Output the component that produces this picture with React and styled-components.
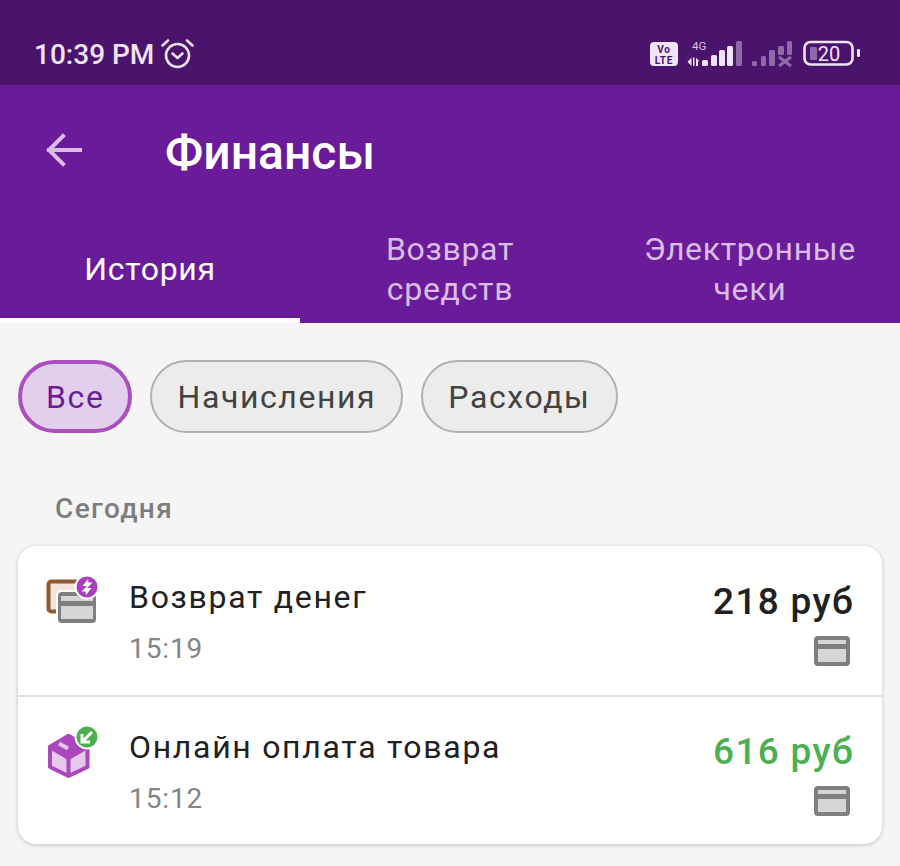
import React from 'react'
import styled, { createGlobalStyle } from 'styled-components'

const GlobalStyle = createGlobalStyle`
  html, body {
    margin: 0;
    padding: 0;
    background: #f5f5f5;
    font-family: Roboto, "Noto Sans", sans-serif;
  }
`

const Page = styled.div`
  width: 900px;
  height: 866px;
  overflow: hidden;
  background: #f5f5f5;
`

const StatusBar = styled.div`
  height: 85px;
  box-sizing: border-box;
  padding: 23px 40px 0 34px;
  background: #4a136c;
  display: flex;
  align-items: center;
  justify-content: space-between;
  color: #efe3f4;
`

const StatusLeft = styled.div`
  display: flex;
  align-items: center;
  gap: 7px;
  font-size: 28px;
  font-weight: 500;
`

const Header = styled.header`
  height: 238px;
  background: #6a1b9a;
  display: flex;
  flex-direction: column;
`

const TitleRow = styled.div`
  height: 130px;
  box-sizing: border-box;
  padding: 0 0 0 46px;
  display: flex;
  align-items: center;
  gap: 83px;
`

const Title = styled.h1`
  margin: 0;
  color: #fff;
  font-size: 48px;
  font-weight: 500;
  line-height: 1;
  padding-top: 6px;
`

const Tabs = styled.div`
  flex: 1;
  display: grid;
  grid-template-columns: repeat(3, 300px);
`

const Tab = styled.div`
  display: flex;
  align-items: center;
  justify-content: center;
  text-align: center;
  box-sizing: border-box;
  padding-top: 5px;
  font-size: 32px;
  line-height: 40px;
  letter-spacing: 0.7px;
  color: ${(p) => (p.$active ? '#fff' : '#d9bde6')};
  border-bottom: 5px solid ${(p) => (p.$active ? '#fff' : 'transparent')};
`

const Chips = styled.div`
  display: flex;
  gap: 18px;
  padding: 37px 0 0 18px;
`

const Chip = styled.div`
  height: 73px;
  box-sizing: border-box;
  padding: 0 ${(p) => (p.$active ? '24px' : '25px')};
  display: flex;
  align-items: center;
  border-radius: 37px;
  font-size: 32px;
  letter-spacing: 1.6px;
  color: ${(p) => (p.$active ? '#6a1b9a' : '#424242')};
  background: ${(p) => (p.$active ? '#e1cfeb' : '#ececec')};
  border: ${(p) => (p.$active ? '4px solid #ab4fbf' : '2px solid #b0b0b0')};
`

const SectionLabel = styled.div`
  margin: 57px 0 0 55px;
  height: 36px;
  display: flex;
  align-items: center;
  font-size: 28px;
  font-weight: 500;
  letter-spacing: 1.4px;
  color: #7d7d7d;
`

const Card = styled.div`
  margin: 20px 18px 0;
  background: #fff;
  border-radius: 18px;
  box-shadow: 0 1px 4px rgba(0, 0, 0, 0.22);
`

const Row = styled.div`
  height: 149px;
  box-sizing: border-box;
  padding: 3px 28px 0;
  display: flex;
  align-items: center;
  & + & {
    border-top: 2px solid #e2e2e2;
  }
`

const IconSlot = styled.div`
  width: 83px;
  height: 56px;
  flex: none;
  align-self: flex-start;
  margin-top: 26px;
`

const RowBody = styled.div`
  flex: 1;
  display: flex;
  flex-direction: column;
  gap: 16px;
`

const RowTitle = styled.div`
  font-size: 32px;
  line-height: 38px;
  letter-spacing: 1.7px;
  color: #212121;
`

const RowTime = styled.div`
  font-size: 28px;
  line-height: 34px;
  letter-spacing: 0.9px;
  color: #858585;
`

const RowRight = styled.div`
  display: flex;
  flex-direction: column;
  align-items: flex-end;
  gap: 13px;
  margin-top: 3px;
`

const Amount = styled.div`
  font-size: 37px;
  line-height: 42px;
  font-weight: 500;
  letter-spacing: 1.3px;
  color: ${(p) => (p.$income ? '#4caf50' : '#212121')};
`

const PayCard = styled.svg`
  display: block;
  margin-right: 4px;
`

const CardGlyph = () => (
  <PayCard width="36" height="30" viewBox="0 0 36 30">
    <rect x="0" y="0" width="36" height="30" rx="4" fill="#7f7f7f" />
    <rect x="4" y="4" width="28" height="4" fill="#d6d6d6" />
    <rect x="4" y="13" width="28" height="13" fill="#d6d6d6" />
  </PayCard>
)

const Alarm = () => (
  <svg width="33" height="30" viewBox="0 0 33 30" fill="none" stroke="#efe3f4" strokeWidth="2.6" strokeLinecap="round" strokeLinejoin="round">
    <circle cx="16.5" cy="16.5" r="11.5" />
    <path d="M11.5 14.5l5 4.5 5-4.5" />
    <path d="M1.5 6.5L7 1.5M31.5 6.5L26 1.5" />
  </svg>
)

const BackArrow = () => (
  <svg width="36" height="34" viewBox="0 0 36 34" fill="none" stroke="#d9bde6" strokeWidth="4" strokeLinecap="square">
    <path d="M3 17H34" />
    <path d="M17 3L3 17L17 31" />
  </svg>
)

const SignalBars = ({ bars }) =>
  bars.map(([x, y, w, h, dim]) => (
    <rect key={x} x={x} y={y} width={w} height={h} rx="1.5" fill={dim ? '#8f6aa8' : '#efe3f4'} />
  ))

const Signals = () => (
  <svg width="210" height="28" viewBox="0 0 210 28">
    <rect x="0" y="2" width="28" height="24" rx="4" fill="#efe3f4" />
    <text x="14" y="12.5" textAnchor="middle" fontSize="10" fontWeight="700" letterSpacing="0.8" fontFamily="Roboto, sans-serif" fill="#4a136c">Vo</text>
    <text x="14" y="24" textAnchor="middle" fontSize="10" fontWeight="700" letterSpacing="0.8" fontFamily="Roboto, sans-serif" fill="#4a136c">LTE</text>
    <text x="42" y="9.5" fontSize="11.5" fontFamily="Roboto, sans-serif" fill="#d9c6e4">4G</text>
    <path d="M41.5 17.5v8.5l-4-4.2zM43 17.5h1.5v8.5H43zM46 17.5l3.5 3.8H48v4.7h-2z" fill="#efe3f4" />
    <SignalBars
      bars={[
        [52, 20, 6, 6],
        [61, 15, 6, 11],
        [69, 10, 6, 16],
        [77, 6, 6, 20],
        [86, 1, 6, 25, true],
        [102, 21, 5, 5, true],
        [111, 16, 5, 10, true],
        [119, 10, 6, 16, true],
        [128, 6, 6, 9, true],
        [137, 1, 5, 14, true],
      ]}
    />
    <path d="M129 17l12 9M141 17l-12 9" stroke="#8f6aa8" strokeWidth="3.2" />
    <rect x="154.5" y="2" width="48" height="22.5" rx="6" fill="none" stroke="#efe3f4" strokeWidth="2.6" />
    <rect x="160" y="7" width="7" height="13" rx="1" fill="#8f6aa8" />
    <text x="179" y="21" textAnchor="middle" fontSize="20" fontFamily="Roboto, sans-serif" fill="#efe3f4">20</text>
    <rect x="207" y="9" width="3" height="8" rx="1" fill="#efe3f4" />
  </svg>
)

const RefundIcon = () => (
  <svg width="56" height="56" viewBox="0 0 56 56">
    <rect x="2.5" y="6.5" width="35" height="30" rx="3" fill="#f1e4da" stroke="#8d5a36" strokeWidth="4" />
    <rect x="10" y="15" width="42" height="36" rx="5" fill="#fff" />
    <rect x="12" y="17" width="38" height="31" rx="4" fill="#7f7f7f" />
    <rect x="15" y="21" width="32" height="5" fill="#d6d6d6" />
    <rect x="15" y="31" width="32" height="13" fill="#d6d6d6" />
    <circle cx="41" cy="12" r="12.5" fill="#fff" />
    <circle cx="41" cy="12" r="10.5" fill="#a83fbd" />
    <path d="M36.5 11l5.5-7 .5 3.5h4L41 13l-.5-2zM45.5 13l-5.5 7-.5-3.5h-4l5.5-5.5.5 2z" fill="#fff" />
  </svg>
)

const PackageIcon = () => (
  <svg width="56" height="56" viewBox="0 0 56 56">
    <path d="M22.5 10L41.5 21V41L22.5 50L4 41V21Z" fill="#e6c8ee" stroke="#ab47bc" strokeWidth="4" strokeLinejoin="round" />
    <path d="M4 21L22.5 10L41.5 21L22.5 32Z" fill="#ab47bc" stroke="#ab47bc" strokeWidth="4" strokeLinejoin="round" />
    <path d="M22.5 32V50" fill="none" stroke="#ab47bc" strokeWidth="4" />
    <path d="M13 17.5L22 22.5" stroke="#e6c8ee" strokeWidth="4" />
    <circle cx="41" cy="11" r="12.5" fill="#fff" />
    <circle cx="41" cy="11" r="10.5" fill="#4caf50" />
    <path d="M46 6L37 15M36 8V16H44" fill="none" stroke="#fff" strokeWidth="3" />
  </svg>
)

const operations = [
  { title: 'Возврат денег', time: '15:19', amount: '218 руб', Icon: RefundIcon },
  { title: 'Онлайн оплата товара', time: '15:12', amount: '616 руб', income: true, Icon: PackageIcon },
]

export default function App() {
  return (
    <Page>
      <GlobalStyle />
      <StatusBar>
        <StatusLeft>
          10:39 PM
          <Alarm />
        </StatusLeft>
        <Signals />
      </StatusBar>
      <Header>
        <TitleRow>
          <BackArrow />
          <Title>Финансы</Title>
        </TitleRow>
        <Tabs>
          <Tab $active>История</Tab>
          <Tab>Возврат<br />средств</Tab>
          <Tab>Электронные<br />чеки</Tab>
        </Tabs>
      </Header>
      <Chips>
        <Chip $active>Все</Chip>
        <Chip>Начисления</Chip>
        <Chip>Расходы</Chip>
      </Chips>
      <SectionLabel>Сегодня</SectionLabel>
      <Card>
        {operations.map(({ title, time, amount, income, Icon }) => (
          <Row key={title}>
            <IconSlot>
              <Icon />
            </IconSlot>
            <RowBody>
              <RowTitle>{title}</RowTitle>
              <RowTime>{time}</RowTime>
            </RowBody>
            <RowRight>
              <Amount $income={income}>{amount}</Amount>
              <CardGlyph />
            </RowRight>
          </Row>
        ))}
      </Card>
    </Page>
  )
}
